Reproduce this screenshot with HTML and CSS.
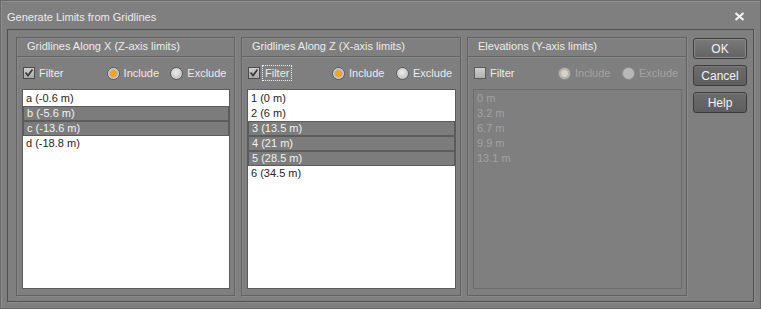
FILE: index.html
```html
<!DOCTYPE html>
<html lang="en">
<head>
    <meta charset="UTF-8">
    <title>Generate Limits from Gridlines</title>
    <link rel="stylesheet" href="styles.css">
</head>
<body>
<div class="dialog">
    <div class="titlebar">
        <span class="title">Generate Limits from Gridlines</span>
        <svg class="close" width="11" height="9" viewBox="0 0 11 9"><path d="M1.5 1 L9.5 8 M9.5 1 L1.5 8" stroke="#f2f2f2" stroke-width="2.2"/></svg>
    </div>
    <div class="frame">
        <div class="group">
            <div class="group-head">Gridlines Along X (Z-axis limits)</div>
            <div class="options">
                <label class="check"><span class="box"><svg width="10" height="10" viewBox="0 0 10 10"><path d="M1.5 4.5 L4 7.5 L8.5 1.5" fill="none" stroke="#3a3a3a" stroke-width="1.8"/></svg></span>Filter</label>
                <label class="radio"><span class="dot on"></span>Include</label>
                <label class="radio"><span class="dot"></span>Exclude</label>
            </div>
            <ul class="list">
                <li>a (-0.6 m)</li>
                <li class="sel">b (-5.6 m)</li>
                <li class="sel">c (-13.6 m)</li>
                <li>d (-18.8 m)</li>
            </ul>
        </div>
        <div class="group">
            <div class="group-head">Gridlines Along Z (X-axis limits)</div>
            <div class="options">
                <label class="check"><span class="box"><svg width="10" height="10" viewBox="0 0 10 10"><path d="M1.5 4.5 L4 7.5 L8.5 1.5" fill="none" stroke="#3a3a3a" stroke-width="1.8"/></svg></span><span class="focus">Filter</span></label>
                <label class="radio"><span class="dot on"></span>Include</label>
                <label class="radio"><span class="dot"></span>Exclude</label>
            </div>
            <ul class="list">
                <li>1 (0 m)</li>
                <li>2 (6 m)</li>
                <li class="sel">3 (13.5 m)</li>
                <li class="sel">4 (21 m)</li>
                <li class="sel">5 (28.5 m)</li>
                <li>6 (34.5 m)</li>
            </ul>
        </div>
        <div class="group disabled">
            <div class="group-head">Elevations (Y-axis limits)</div>
            <div class="options">
                <label class="check"><span class="box"></span>Filter</label>
                <label class="radio"><span class="dot on"></span>Include</label>
                <label class="radio"><span class="dot"></span>Exclude</label>
            </div>
            <ul class="list">
                <li>0 m</li>
                <li>3.2 m</li>
                <li>6.7 m</li>
                <li>9.9 m</li>
                <li>13.1 m</li>
            </ul>
        </div>
        <div class="buttons">
            <button class="btn default">OK</button>
            <button class="btn">Cancel</button>
            <button class="btn">Help</button>
        </div>
    </div>
</div>
</body>
</html>
```

FILE: styles.css
```css
* {
    margin: 0;
    padding: 0;
    box-sizing: border-box;
}

body {
    background: #7f7f7f;
    font-family: "Liberation Sans", Arial, sans-serif;
    font-size: 11px;
    color: #ececec;
}

ul {
    list-style: none;
}

.dialog {
    width: 761px;
    height: 309px;
    background: #7f7f7f;
    border: 1px solid #6a6a6a;
    box-shadow: inset 1px 1px 0 #8e8e8e;
}

.titlebar {
    height: 28px;
    display: flex;
    align-items: center;
    padding: 3px 0 0 6px;
}
.title {
    flex: 1;
}
.close {
    margin-right: 15px;
}

.frame {
    margin-left: 6px;
    width: 747px;
    height: 273px;
    border: 1px solid #4f4f4f;
    box-shadow: 1px 1px 0 #8d8d8d;
    display: grid;
    grid-template-columns: 219px 220px 220px 54px;
    column-gap: 6px;
    align-items: start;
    padding: 7px 0 0 8px;
}

.group {
    height: 259px;
    border: 1px solid #626262;
    box-shadow: inset 1px 1px 0 #888888, 1px 1px 0 #8a8a8a;
    display: flex;
    flex-direction: column;
}
.group-head {
    height: 19px;
    padding: 2px 0 0 10px;
    border-bottom: 1px solid #646464;
    box-shadow: 0 1px 0 #8a8a8a;
}

.options {
    height: 32px;
    display: flex;
    align-items: center;
    padding-left: 6px;
}
.check {
    width: 84px;
    display: flex;
    align-items: center;
}
.radio {
    width: 64px;
    display: flex;
    align-items: center;
}
.box {
    width: 12px;
    height: 12px;
    margin-right: 4px;
    border: 1px solid #4a4a4a;
    background: linear-gradient(#cfcfcf, #a9a9a9);
    display: flex;
    align-items: center;
    justify-content: center;
}
.focus {
    outline: 1px dotted #f0f0f0;
    outline-offset: 1px;
    padding: 0 1px;
}
.dot {
    width: 13px;
    height: 13px;
    margin-right: 4px;
    border-radius: 50%;
    border: 1px solid #5c5c5c;
    background: radial-gradient(circle at 45% 40%, #ececec, #b4b4b4);
}
.dot.on {
    background: radial-gradient(circle, #f7a21c 0, #f0a020 3px, #bdbdbd 4px, #d6d6d6 6px);
}

.list {
    flex: 1;
    margin: 0 4px 6px 5px;
    padding-top: 1px;
    background: #ffffff;
    border: 1px solid #5a5a5a;
    color: #1e1e1e;
}
.list li {
    height: 15px;
    line-height: 14px;
    padding-left: 3px;
}
.list li.sel {
    background: #7c7c7c;
    border: 1px solid #5c5c5c;
    color: #f2f2f2;
    line-height: 12px;
}

.disabled .options {
    color: #a4a4a4;
}
.disabled .options .check {
    color: #ececec;
}
.disabled .box {
    background: linear-gradient(#d0d0d0, #b0b0b0);
    border-color: #5a5a5a;
}
.disabled .dot {
    border-color: #8e8e8e;
    background: #b8b8b8;
}
.disabled .dot.on {
    background: radial-gradient(circle, #d8d2c4 0, #d8d2c4 3px, #b2b2b2 4px, #bcbcbc 6px);
}
.disabled .list {
    background: #7f7f7f;
    border-color: #6c6c6c;
    color: #a2a2a2;
}

.buttons {
    display: flex;
    flex-direction: column;
    gap: 6px;
    padding-top: 1px;
}
.btn {
    height: 21px;
    font-family: inherit;
    font-size: 12px;
    color: #f2f2f2;
    background: linear-gradient(#6c6c6c, #5e5e5e);
    border: 1px solid #3c3c3c;
    border-radius: 3px;
    box-shadow: inset 0 1px 0 #7a7a7a;
}
.btn.default {
    background: linear-gradient(#7a7a7a, #626262);
    box-shadow: inset 0 0 0 1px #8a8a8a;
}
```
